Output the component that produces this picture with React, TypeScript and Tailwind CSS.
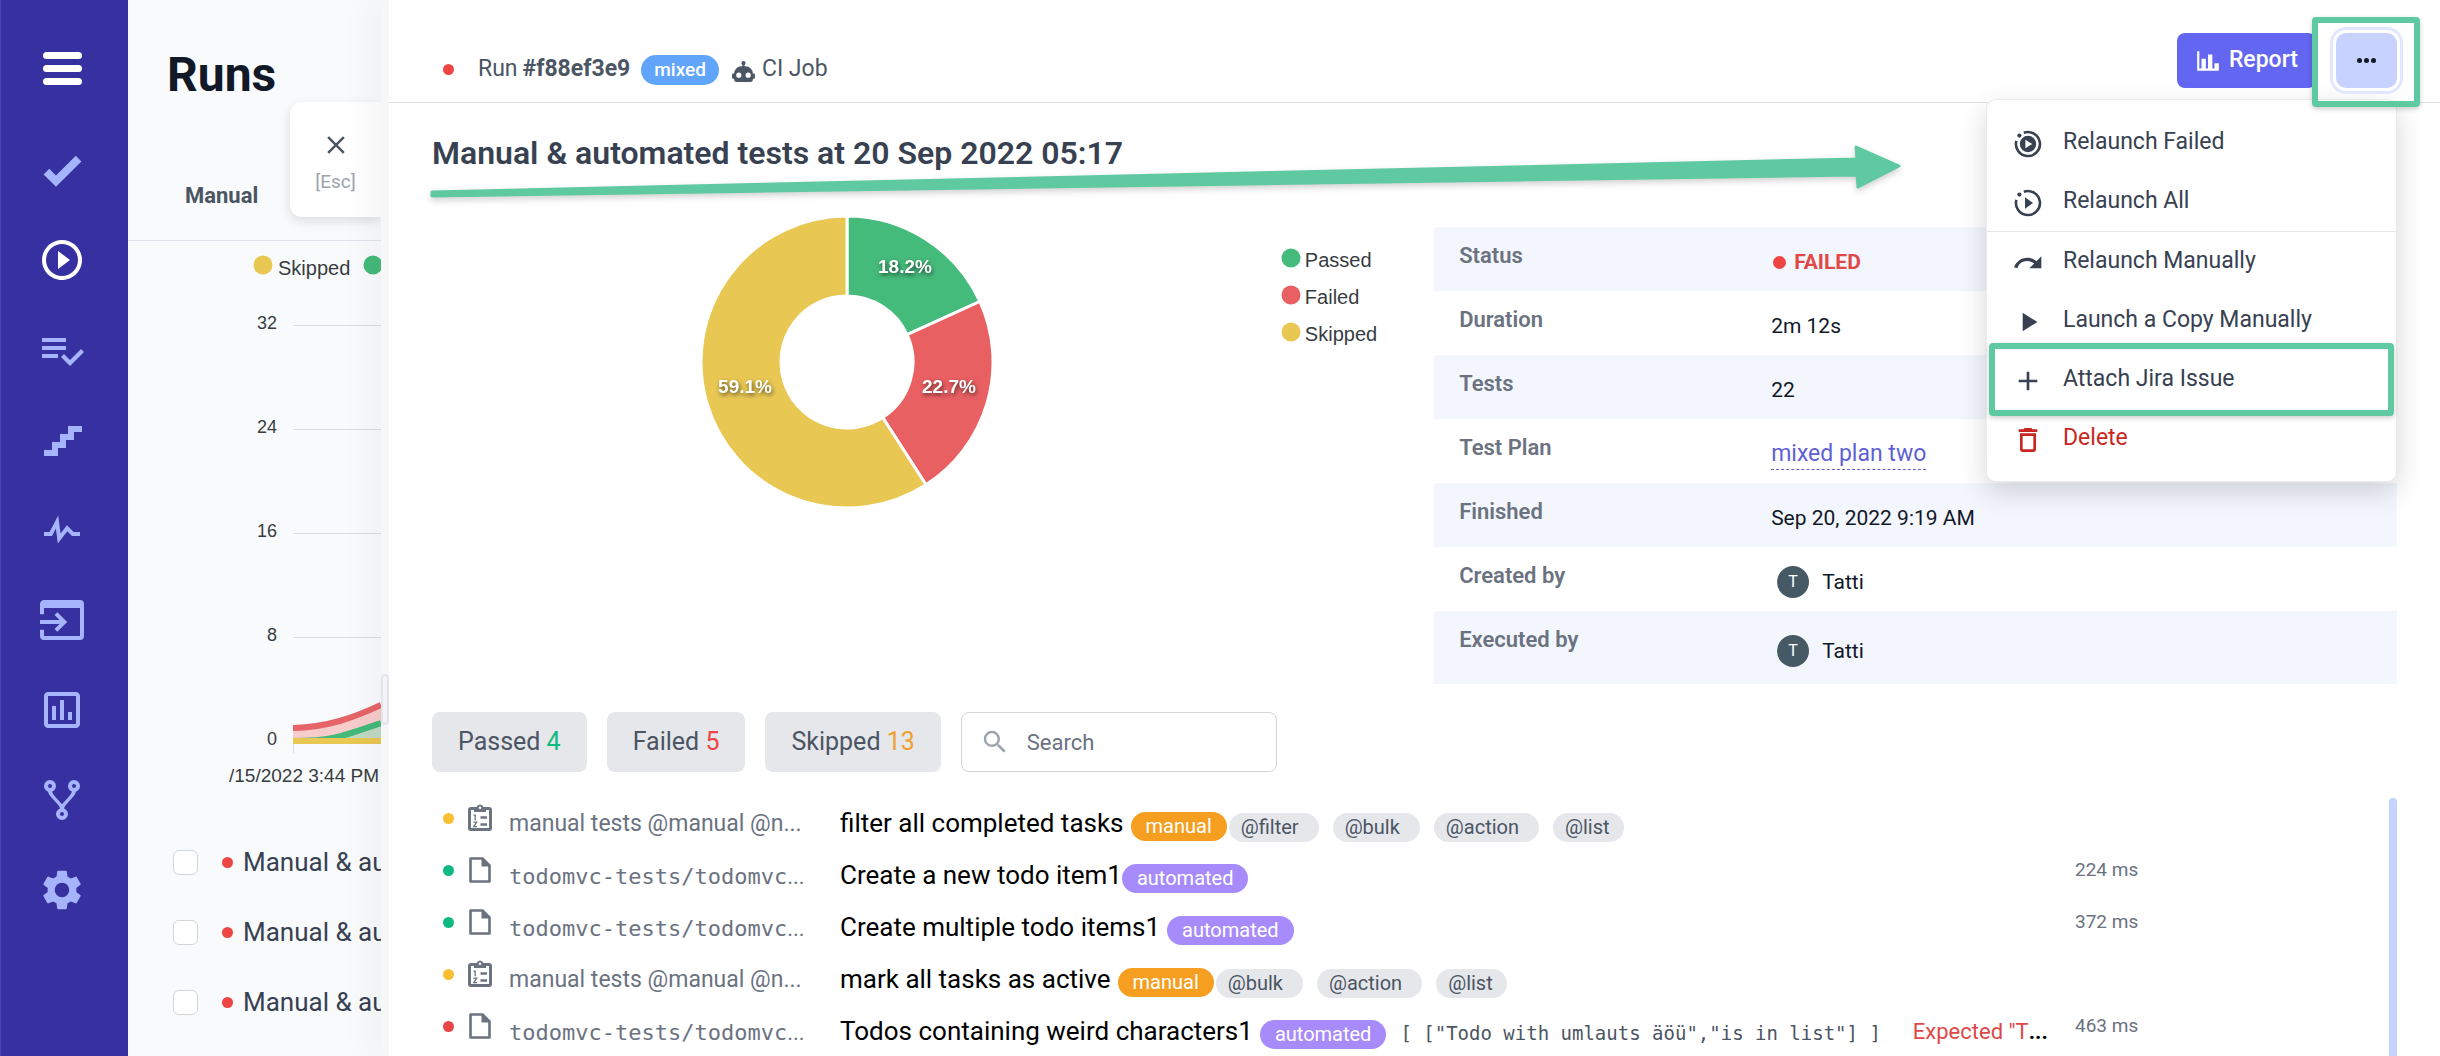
import React from 'react';
import {
  MdAdd,
  MdClose,
  MdDeleteOutline,
  MdPlayArrow,
  MdPlayCircleOutline,
  MdRedo,
  MdSearch,
  MdSettings,
} from 'react-icons/md';

/* ---------- icons ---------- */

function Glyph({ d, className }: { d: string; className: string }) {
  return (
    <svg viewBox="0 0 24 24" fill="currentColor" className={className} aria-hidden="true">
      <path d={d} />
    </svg>
  );
}

const CHECK = 'M9,20.42L2.79,14.21L5.62,11.38L9,14.77L18.88,4.88L21.71,7.71L9,20.42Z';
const PLAYLIST =
  'M14,10H2V12H14V10M14,6H2V8H14V6M2,16H10V14H2V16M21.5,11.5L23,13L16,20L11.5,15.5L13,14L16,17L21.5,11.5Z';
const STAIRS = 'M15,5V9H11V13H7V17H3V20H10V16H14V12H18V8H22V5H15Z';
const PULSE =
  'M3,13H5.79L10.1,4.79L11.28,13.75L14.5,9.66L17.83,13H21V15H17L14.67,12.67L9.92,18.73L8.94,11.31L7,15H3V13Z';
const IMPORT =
  'M1,12H10.76L8.26,9.5L9.67,8.08L14.59,13L9.67,17.92L8.26,16.5L10.76,14H1V12M21,2H3C1.89,2 1,2.9 1,4V9.09H3V6H21V20H3V16.93H1V20A2,2 0 0,0 3,22H21A2,2 0 0,0 23,20V4A2,2 0 0,0 21,2';
const POLL =
  'M19,3H5C3.9,3 3,3.9 3,5V19C3,20.1 3.9,21 5,21H19C20.1,21 21,20.1 21,19V5C21,3.9 20.1,3 19,3M19,19H5V5H19V19M7,10H9V17H7V10M11,7H13V17H11V7M15,13H17V17H15V13';
const FORK =
  'M6,2A3,3 0 0,1 9,5C9,6.28 8.19,7.38 7.06,7.81C7.15,8.27 7.39,8.83 8,9.63C9,10.92 11,12.83 12,14.17C13,12.83 15,10.92 16,9.63C16.61,8.83 16.85,8.27 16.94,7.81C15.81,7.38 15,6.28 15,5A3,3 0 0,1 18,2A3,3 0 0,1 21,5C21,6.32 20.14,7.45 18.95,7.85C18.87,8.37 18.64,9 18,9.83C17,11.17 15,13.08 14,14.38C13.39,15.17 13.15,15.73 13.06,16.19C14.19,16.62 15,17.72 15,19A3,3 0 0,1 12,22A3,3 0 0,1 9,19C9,17.72 9.81,16.62 10.94,16.19C10.85,15.73 10.61,15.17 10,14.38C9,13.08 7,11.17 6,9.83C5.36,9 5.13,8.37 5.05,7.85C3.86,7.45 3,6.32 3,5A3,3 0 0,1 6,2M6,4A1,1 0 0,0 5,5A1,1 0 0,0 6,6A1,1 0 0,0 7,5A1,1 0 0,0 6,4M18,4A1,1 0 0,0 17,5A1,1 0 0,0 18,6A1,1 0 0,0 19,5A1,1 0 0,0 18,4M12,18A1,1 0 0,0 11,19A1,1 0 0,0 12,20A1,1 0 0,0 13,19A1,1 0 0,0 12,18Z';
const ROBOT =
  'M12,2A2,2 0 0,1 14,4C14,4.74 13.6,5.39 13,5.73V7H14A7,7 0 0,1 21,14H22A1,1 0 0,1 23,15V18A1,1 0 0,1 22,19H21V20A2,2 0 0,1 19,22H5A2,2 0 0,1 3,20V19H2A1,1 0 0,1 1,18V15A1,1 0 0,1 2,14H3A7,7 0 0,1 10,7H11V5.73C10.4,5.39 10,4.74 10,4A2,2 0 0,1 12,2M7.5,13A2.5,2.5 0 0,0 5,15.5A2.5,2.5 0 0,0 7.5,18A2.5,2.5 0 0,0 10,15.5A2.5,2.5 0 0,0 7.5,13M16.5,13A2.5,2.5 0 0,0 14,15.5A2.5,2.5 0 0,0 16.5,18A2.5,2.5 0 0,0 19,15.5A2.5,2.5 0 0,0 16.5,13Z';
const CHART_BAR = 'M22,21H2V3H4V19H6V10H10V19H12V6H16V19H18V14H22V21Z';

function RelaunchIcon({ filled }: { filled?: boolean }) {
  return (
    <svg viewBox="-16 -16 32 32" className="size-8" aria-hidden="true">
      <path d="M-4.2 -11.2A12 12 0 1 1 -11.6 -3.2" fill="none" stroke="currentColor" strokeWidth="2.6" />
      <circle cx="-8.6" cy="-8.4" r="2.1" fill="currentColor" />
      {filled && <circle r="8.2" fill="currentColor" />}
      {filled ? (
        <path d="M-2.6 -4.2L4.2 0L-2.6 4.2Z" fill="#fff" />
      ) : (
        <path d="M-3 -5.8L5 0L-3 5.8Z" fill="currentColor" />
      )}
    </svg>
  );
}

function ClipboardIcon() {
  return (
    <svg viewBox="0 0 26 28" className="h-7 w-[26px]" fill="none" stroke="currentColor" aria-hidden="true">
      <rect x="2.5" y="4.5" width="21" height="21" rx="1.5" strokeWidth="3" />
      <path d="M7 3H9.5A3.7 3.7 0 0 1 16.5 3H19V8H7Z" fill="currentColor" stroke="none" />
      <circle cx="13" cy="3.8" r="1.3" fill="#fff" stroke="none" />
      <path d="M13.5 13.5H20M13.5 20.5H20" strokeWidth="2.4" />
      <path d="M6.5 11.2H8.2V16.2M6.5 18.2H9.6L6.8 22.6H10" strokeWidth="1.3" />
    </svg>
  );
}

function DocIcon() {
  return (
    <svg viewBox="0 0 26 28" className="h-7 w-[26px]" fill="none" stroke="currentColor" aria-hidden="true">
      <path d="M3.5 2.5H15.5L22.5 9.5V25.5H3.5Z" strokeWidth="2.6" strokeLinejoin="round" />
      <path d="M14.5 2L23.5 10.5H14.5Z" fill="currentColor" stroke="none" />
    </svg>
  );
}

/* ---------- sidebar ---------- */

function NavButton({ label, active, children }: { label: string; active?: boolean; children: React.ReactNode }) {
  return (
    <button type="button" aria-label={label} className={active ? 'size-12 text-white' : 'size-12 text-[#a5b4fc]'}>
      {children}
    </button>
  );
}

function Sidebar() {
  return (
    <nav className="flex w-32 shrink-0 flex-col items-center border-l border-[#4b45b0] bg-[#3730a0] pt-11 pr-[5px]">
      <button type="button" aria-label="Menu" className="mb-[54px] flex h-12 w-12 flex-col items-center justify-center gap-1.5">
        <span className="h-[7px] w-[39px] rounded-full bg-white" />
        <span className="h-[7px] w-[39px] rounded-full bg-white" />
        <span className="h-[7px] w-[39px] rounded-full bg-white" />
      </button>
      <div className="flex flex-col gap-[42px]">
        <NavButton label="Tests"><Glyph d={CHECK} className="size-12" /></NavButton>
        <NavButton label="Runs" active><MdPlayCircleOutline className="size-12" /></NavButton>
        <NavButton label="Plans"><Glyph d={PLAYLIST} className="size-12" /></NavButton>
        <NavButton label="Steps"><Glyph d={STAIRS} className="size-12" /></NavButton>
        <NavButton label="Pulse"><Glyph d={PULSE} className="size-12" /></NavButton>
        <NavButton label="Imports"><Glyph d={IMPORT} className="size-12" /></NavButton>
        <NavButton label="Analytics"><Glyph d={POLL} className="size-12" /></NavButton>
        <NavButton label="Branches"><Glyph d={FORK} className="size-12" /></NavButton>
        <NavButton label="Settings"><MdSettings className="size-12" /></NavButton>
      </div>
    </nav>
  );
}

/* ---------- runs list behind the detail panel ---------- */

const TICKS = [
  { label: '32', y: 84 },
  { label: '24', y: 188 },
  { label: '16', y: 292 },
  { label: '8', y: 396 },
];

function RunsChart() {
  return (
    <svg viewBox="0 0 253 586" className="block h-[586px] w-[253px] font-['Liberation_Sans',sans-serif]" fill="#373d3f">
      <circle cx="135" cy="24" r="9.5" fill="#e9c753" />
      <text x="150" y="34" fontSize="20">Skipped</text>
      <circle cx="245" cy="24" r="9.5" fill="#44ba79" />
      {TICKS.map((t) => (
        <g key={t.label}>
          <text x="149" y={t.y + 4} fontSize="18" textAnchor="end">{t.label}</text>
          <path d={`M165 ${t.y + 0.5}H253`} stroke="#dcdfe2" />
        </g>
      ))}
      <text x="149" y="504" fontSize="18" textAnchor="end">0</text>
      <path d="M165 487C200 486 225 477 253 464V500H165Z" fill="#f8cbcc" />
      <path d="M165 500C205 500 215 495 253 482V500Z" fill="#c0d9c4" />
      <path d="M165 487C200 486 225 477 253 464" fill="none" stroke="#e56467" strokeWidth="6" />
      <path d="M165 500C205 500 215 495 253 482" fill="none" stroke="#44ba79" strokeWidth="6" />
      <path d="M165 500H253" stroke="#e9c753" strokeWidth="6" />
      <path d="M165.5 503V512" stroke="#dcdfe2" />
      <text x="251" y="541" fontSize="19" textAnchor="end">/15/2022 3:44 PM</text>
    </svg>
  );
}

function RunsPanel() {
  return (
    <aside className="relative w-[253px] shrink-0 overflow-hidden bg-[#f9fafc]">
      <h1 className="pt-[45px] pl-[39px] text-[48px] leading-[60px] font-bold text-[#111827]">Runs</h1>
      <div className="mt-[60px] flex h-[76px] border-b border-[#dfe4ea] pl-[57px]">
        <button type="button" className="h-[60px] text-[22px] font-bold text-[#4b5563]">Manual</button>
      </div>
      <RunsChart />
      <ul>
        {['r1', 'r2', 'r3'].map((id) => (
          <li key={id} className="flex h-[70px] items-center pl-[45px] whitespace-nowrap">
            <input
              id={id}
              type="checkbox"
              className="size-[25px] shrink-0 appearance-none rounded-md border border-[#d1d5db] bg-white"
            />
            <span className="ml-6 size-[11px] shrink-0 rounded-full bg-[#ef4444]" />
            <label htmlFor={id} className="ml-2.5 text-[26px] text-[#374151]">Manual &amp; automated</label>
          </li>
        ))}
      </ul>
      <button
        type="button"
        className="absolute top-[102px] right-0 flex h-[115px] w-[91px] flex-col items-center rounded-l-xl bg-white pt-7 shadow-[0_4px_12px_rgba(0,0,0,0.12)]"
      >
        <MdClose className="size-[30px] text-[#4b5563]" />
        <span className="mt-2 text-[19px] leading-7 text-[#9ca3af]">[Esc]</span>
      </button>
    </aside>
  );
}

/* ---------- run header and menu ---------- */

function MenuItem({ icon, label, danger, divided, marked }: {
  icon: React.ReactNode;
  label: string;
  danger?: boolean;
  divided?: boolean;
  marked?: boolean;
}) {
  return (
    <li className={divided ? 'relative border-b border-[#e5e7eb]' : 'relative'}>
      <button
        type="button"
        className={
          danger
            ? 'flex h-[59px] w-full items-center gap-[19px] pl-[25px] text-[23px] text-[#c92622]'
            : 'flex h-[59px] w-full items-center gap-[19px] pl-[25px] text-[23px] text-[#374151]'
        }
      >
        <span className="mt-0.5 [&>svg]:size-8">{icon}</span>
        {label}
      </button>
      {marked && (
        <span className="pointer-events-none absolute inset-x-0.5 -inset-y-[7px] rounded border-[6px] border-[#5fc9a1] shadow-[0_2px_5px_rgba(0,0,0,0.2)]" />
      )}
    </li>
  );
}

function ActionMenu() {
  return (
    <ul className="absolute top-[99px] right-[43px] z-20 w-[411px] rounded-[10px] border border-[#e8eaed] bg-white py-[13px] shadow-[0_10px_28px_rgba(0,0,0,0.16)]">
      <MenuItem icon={<RelaunchIcon filled />} label="Relaunch Failed" />
      <MenuItem icon={<RelaunchIcon />} label="Relaunch All" divided />
      <MenuItem icon={<MdRedo />} label="Relaunch Manually" />
      <MenuItem icon={<MdPlayArrow />} label="Launch a Copy Manually" />
      <MenuItem icon={<MdAdd />} label="Attach Jira Issue" marked />
      <MenuItem icon={<MdDeleteOutline />} label="Delete" danger />
    </ul>
  );
}

function RunHeader() {
  return (
    <header className="relative flex h-[103px] shrink-0 items-center border-b border-[#e1e3e6] pr-[43px] pl-[54px] text-[#4b5563]">
      <div className="flex items-center pt-9 text-[23px]">
        <span className="size-[11px] rounded-full bg-[#ef4444]" />
        <span className="ml-6">Run</span>
        <b className="ml-[5px]">#f88ef3e9</b>
        <span className="mt-0.5 ml-[11px] rounded-full bg-[#60a5fa] px-[13px] text-[19px] leading-[30px] font-medium text-white">mixed</span>
        <Glyph d={ROBOT} className="mt-1 ml-3 size-[25px]" />
        <span className="ml-1.5">CI Job</span>
      </div>
      <div className="mb-[-18px] ml-auto flex h-full items-start gap-5 pt-[24px]">
        <button type="button" className="flex h-[55px] items-center gap-2 rounded-lg bg-[#6366f1] px-[18px] text-[23px] font-medium text-white">
          <Glyph d={CHART_BAR} className="size-[26px]" />
          Report
        </button>
        <div className="relative z-30">
          <button
            type="button"
            aria-label="More actions"
            className="flex h-[55px] w-[61px] items-center justify-center gap-0.5 rounded-[10px] bg-[#c7d2fe] ring-3 ring-[#e0e7ff] ring-offset-3 ring-offset-white"
          >
            <span className="size-[5px] rounded-full bg-[#111827]" />
            <span className="size-[5px] rounded-full bg-[#111827]" />
            <span className="size-[5px] rounded-full bg-[#111827]" />
          </button>
          <span className="pointer-events-none absolute -top-4 -right-[23px] -bottom-[19px] -left-6 rounded border-[6px] border-[#5fc9a1] shadow-[0_2px_5px_rgba(0,0,0,0.2)]" />
        </div>
      </div>
      <ActionMenu />
    </header>
  );
}

/* ---------- summary ---------- */

const SLICES = [
  { name: 'Passed', value: 18.2, color: '#45bb7b', lx: 58, ly: -96 },
  { name: 'Failed', value: 22.7, color: '#e96063', lx: 102, ly: 24 },
  { name: 'Skipped', value: 59.1, color: '#e9c753', lx: -102, ly: 24 },
];

function slicePath(from: number, to: number) {
  const R = 146;
  const r = 66;
  const p = (f: number, rad: number) => {
    const a = (f / 100) * 2 * Math.PI;
    return `${(Math.sin(a) * rad).toFixed(2)} ${(-Math.cos(a) * rad).toFixed(2)}`;
  };
  const big = to - from > 50 ? 1 : 0;
  return `M${p(from, R)}A${R} ${R} 0 ${big} 1 ${p(to, R)}L${p(to, r)}A${r} ${r} 0 ${big} 0 ${p(from, r)}Z`;
}

function Donut() {
  let at = 0;
  return (
    <svg viewBox="-148 -148 296 296" className="size-[296px] font-['Liberation_Sans',sans-serif]">
      {SLICES.map((s) => {
        const from = at;
        at += s.value;
        return <path key={s.name} d={slicePath(from, at)} fill={s.color} stroke="#fff" strokeWidth="3" />;
      })}
      {SLICES.map((s) => (
        <text
          key={s.name}
          x={s.lx}
          y={s.ly + 7}
          fontSize="19"
          fontWeight="700"
          fill="#fff"
          textAnchor="middle"
          className="drop-shadow-[1px_2px_2px_rgba(0,0,0,0.6)]"
        >
          {s.value}%
        </text>
      ))}
    </svg>
  );
}

function Person() {
  return (
    <span className="ml-1.5 flex items-center gap-[13px]">
      <span className="flex size-8 items-center justify-center rounded-full bg-[#455a64] text-[16px] text-white">T</span>
      Tatti
    </span>
  );
}

const DETAILS: { name: string; value: React.ReactNode }[] = [
  {
    name: 'Status',
    value: (
      <span className="flex items-center gap-2 font-bold text-[#e04848]">
        <span className="ml-0.5 size-[13px] rounded-full bg-[#ef4444]" />
        FAILED
      </span>
    ),
  },
  { name: 'Duration', value: '2m 12s' },
  { name: 'Tests', value: '22' },
  {
    name: 'Test Plan',
    value: <a href="#plan" className="border-b border-dashed border-[#6366c8] pb-0.5 text-[23px] text-[#5f5fd6]">mixed plan two</a>,
  },
  { name: 'Finished', value: 'Sep 20, 2022 9:19 AM' },
  { name: 'Created by', value: <Person /> },
  { name: 'Executed by', value: <Person /> },
];

function Summary() {
  return (
    <section className="grid grid-cols-[51fr_49fr]">
      <div className="flex items-start justify-between pt-[11px] pr-[57px] pl-[267px]">
        <Donut />
        <ul className="mt-7 flex flex-col font-['Liberation_Sans',sans-serif] text-[20px] leading-[37px] text-[#373d3f]">
          {SLICES.map((s) => (
            <li key={s.name} className="flex items-center gap-1">
              <svg viewBox="0 0 20 20" className="mb-1.5 size-5"><circle cx="10" cy="10" r="9.5" fill={s.color} /></svg>
              {s.name}
            </li>
          ))}
        </ul>
      </div>
      <table className="mt-6 w-full text-left text-[21px] leading-7 text-[#111827]">
        <tbody>
          {DETAILS.map((d) => (
            <tr key={d.name} className="h-16 odd:bg-[#f4f6fe] last:h-[73px]">
              <th scope="row" className="w-[35%] pt-[15px] pl-[25px] align-top text-[22px] font-semibold text-[#6b7280]">{d.name}</th>
              <td className="pt-1.5 align-middle">{d.value}</td>
            </tr>
          ))}
        </tbody>
      </table>
    </section>
  );
}

/* ---------- filters and tests ---------- */

function Filters() {
  const button = 'h-[60px] rounded-lg bg-[#e5e7eb] px-[26px] text-[25px] text-[#4b5563]';
  return (
    <div className="mt-7 flex gap-5">
      <button type="button" className={button}>Passed <span className="text-[#10b981]">4</span></button>
      <button type="button" className={button}>Failed <span className="text-[#ef4444]">5</span></button>
      <button type="button" className={button}>Skipped <span className="text-[#f0a02c]">13</span></button>
      <label className="flex h-[60px] w-[316px] items-center gap-[17px] rounded-lg border border-[#d1d5db] bg-white pl-[18px]">
        <MdSearch className="size-[30px] shrink-0 text-[#9ca3af]" />
        <input
          type="text"
          aria-label="Search"
          placeholder="Search"
          className="w-full min-w-0 bg-transparent text-[22px] outline-none placeholder:text-[#6b7280]"
        />
      </label>
    </div>
  );
}

interface Test {
  title: string;
  status: 'passed' | 'failed' | 'skipped';
  manual?: boolean;
  tight?: boolean;
  tags?: string[];
  params?: string;
  error?: string;
  time?: string;
}

const TESTS: Test[] = [
  { title: 'filter all completed tasks', status: 'skipped', manual: true, tags: ['@filter', '@bulk', '@action', '@list'] },
  { title: 'Create a new todo item1', status: 'passed', tight: true, time: '224 ms' },
  { title: 'Create multiple todo items1', status: 'passed', time: '372 ms' },
  { title: 'mark all tasks as active', status: 'skipped', manual: true, tags: ['@bulk', '@action', '@list'] },
  {
    title: 'Todos containing weird characters1',
    status: 'failed',
    params: '[ ["Todo with umlauts äöü","is in list"] ]',
    error: 'Expected "T',
    time: '463 ms',
  },
];

const DOT = { passed: 'bg-[#10b981]', failed: 'bg-[#e84545]', skipped: 'bg-[#fbbf34]' };

function TestRow({ test }: { test: Test }) {
  return (
    <li className="flex h-[52px] items-center pl-[11px] whitespace-nowrap">
      <span className={`size-[11px] shrink-0 rounded-full ${DOT[test.status]}`} />
      <span className="ml-[13px] shrink-0 text-[#6b7280]">{test.manual ? <ClipboardIcon /> : <DocIcon />}</span>
      {test.manual ? (
        <span className="ml-4 w-[331px] shrink-0 pt-3 text-[23px] text-[#6b7280]">manual tests @manual @n...</span>
      ) : (
        <span className="ml-4 w-[331px] shrink-0 pt-3 font-['DejaVu_Sans_Mono',monospace] text-[22px] text-[#6b7280]">
          todomvc-tests/todomvc<span className="font-['Roboto',sans-serif]">...</span>
        </span>
      )}
      <div className="flex min-w-0 flex-1 items-center overflow-hidden pt-2.5">
        <a href="#test" className="text-[26px] leading-8 text-black">{test.title}</a>
        <span
          className={`mt-1.5 rounded-full px-[15px] text-[20px] leading-[29px] text-white ${
            test.manual ? 'bg-[#f59e1f]' : 'bg-[#a78bfa]'
          } ${test.tight ? '' : 'ml-[7px]'}`}
        >
          {test.manual ? 'manual' : 'automated'}
        </span>
        {test.tags && (
          <span className="mt-2 ml-0.5 flex gap-3.5">
            {test.tags.map((t) => (
              <span key={t} className="rounded-full bg-[#e5e7eb] pr-5 pl-3 text-[20px] leading-[29px] text-[#4b5563] last:pr-3.5">{t}</span>
            ))}
          </span>
        )}
        {test.params && (
          <code className="mt-1 ml-3.5 font-['DejaVu_Sans_Mono',monospace] text-[19px] whitespace-pre text-[#4b5563]">{test.params}</code>
        )}
        {test.error && (
          <span className="ml-8 text-[22px] text-[#e04848]">
            {test.error}<b className="text-black">...</b>
          </span>
        )}
      </div>
      <span className="w-[314px] shrink-0 text-[19px] text-[#6b7280]">{test.time}</span>
    </li>
  );
}

function TestList() {
  return (
    <section className="mt-5 flex flex-1">
      <ul className="min-w-0 flex-1">
        {TESTS.map((t) => <TestRow key={t.title} test={t} />)}
      </ul>
      <div className="mt-1.5 w-2 rounded-t-full bg-[#c7d2fe]" />
    </section>
  );
}

/* ---------- page ---------- */

export default function App() {
  return (
    <div className="flex min-h-screen bg-white font-['Roboto',sans-serif]">
      <Sidebar />
      <RunsPanel />
      <div className="z-10 flex w-2 shrink-0 items-start bg-[#f6f7f8] pt-[674px] shadow-[0_0_36px_rgba(0,0,0,0.16)]">
        <span className="h-[51px] w-2 rounded border-2 border-[#e3e5ea] bg-[#f3f4f6]" />
      </div>
      <div className="z-10 flex min-w-0 flex-1 flex-col bg-white">
        <RunHeader />
        <main className="flex flex-1 flex-col px-[43px]">
          <div className="relative flex h-[100px] items-center">
            <h2 className="text-[32px] font-semibold text-[#374151]">Manual &amp; automated tests at 20 Sep 2022 05:17</h2>
            <svg
              viewBox="0 0 1480 60"
              className="pointer-events-none absolute top-9 -left-2 z-10 h-[60px] w-[1480px] drop-shadow-[0_3px_3px_rgba(0,0,0,0.18)]"
              aria-hidden="true"
            >
              <path
                d="M8 53L1433 20L1432 8L1475 27L1434 48L1433 36L8 57Z"
                fill="#5fc9a1"
                stroke="#5fc9a1"
                strokeWidth="3"
                strokeLinejoin="round"
              />
            </svg>
          </div>
          <Summary />
          <Filters />
          <TestList />
        </main>
      </div>
    </div>
  );
}
